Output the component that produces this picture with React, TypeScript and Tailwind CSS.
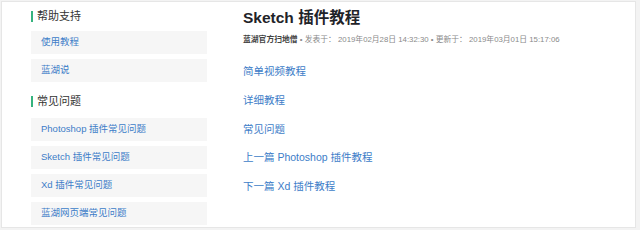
const supportItems = ["使用教程", "蓝湖说"];
const faqItems = ["Photoshop 插件常见问题", "Sketch 插件常见问题", "Xd 插件常见问题", "蓝湖网页端常见问题"];
const links = ["简单视频教程", "详细教程", "常见问题", "上一篇 Photoshop 插件教程", "下一篇 Xd 插件教程"];

function SectionTitle({ children, className = "" }: { children: React.ReactNode; className?: string }) {
  return (
    <div className={`flex items-center gap-[4px] h-[12px] ${className}`}>
      <span className="w-[2px] h-[11px] bg-[#36b37e]" />
      <span className="text-[11px] leading-[12px] text-[#333]">{children}</span>
    </div>
  );
}

function MenuList({ items, className = "" }: { items: string[]; className?: string }) {
  return (
    <div className={`flex flex-col gap-[5px] ${className}`}>
      {items.map((item) => (
        <div key={item} className="h-[23px] flex items-center px-[10px] bg-[#f6f6f6] text-[9.5px] text-[#3d7dc8]">
          {item}
        </div>
      ))}
    </div>
  );
}

export default function App() {
  return (
    <div
      className="w-[640px] h-[230px] bg-[#f3f3f3] pt-[1px] pl-[1px]"
      style={{ fontFamily: '"Liberation Sans", "Noto Sans CJK SC", sans-serif' }}
    >
      <div className="w-[635px] h-[227px] border border-[#e6e6e6] bg-white flex">
        <aside className="w-[176px] ml-[29px] shrink-0">
          <SectionTitle className="mt-[8px]">帮助支持</SectionTitle>
          <MenuList items={supportItems} className="mt-[9px]" />
          <SectionTitle className="mt-[13px]">常见问题</SectionTitle>
          <MenuList items={faqItems} className="mt-[11px]" />
        </aside>

        <main className="ml-[36px] flex-1">
          <h1 className="mt-[6px] h-[20px] leading-[20px] text-[15.5px] font-bold text-[#1f2329]">Sketch 插件教程</h1>
          <div className="mt-[6px] h-[12px] leading-[12px] text-[7.8px] text-[#8a8a8a] whitespace-nowrap">
            <span className="font-bold text-[#444]">蓝湖官方扫地僧</span>
            <span> • 发表于： 2019年02月28日 14:32:30 • 更新于： 2019年03月01日 15:17:06</span>
          </div>
          <div className="mt-[18px] flex flex-col gap-[14.75px]">
            {links.map((link) => (
              <a key={link} className="h-[14px] leading-[14px] text-[10.5px] text-[#3d7dc8] cursor-pointer">
                {link}
              </a>
            ))}
          </div>
        </main>
      </div>
    </div>
  );
}
